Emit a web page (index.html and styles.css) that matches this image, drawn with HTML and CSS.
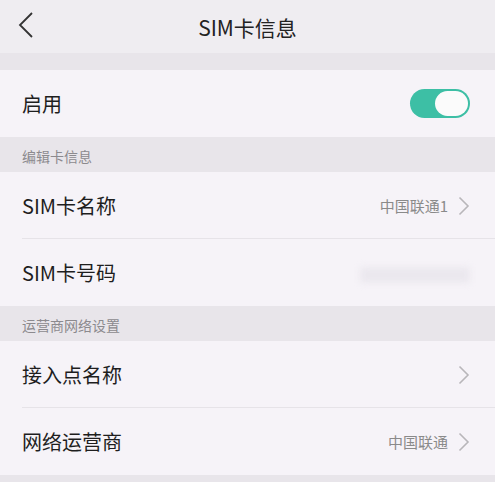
FILE: index.html
```html
<!DOCTYPE html>
<html lang="zh">

<head>
    <meta charset="UTF-8">
    <title>SIM卡信息</title>
    <link rel="stylesheet" href="styles.css">
</head>

<body>
    <div class="page">
        <div class="topbar">
            <svg class="back" width="20" height="28" viewBox="0 0 20 28">
                <path d="M16 2 L4 14 L16 26" fill="none" stroke="#333" stroke-width="1.8"/>
            </svg>
            <span class="title">SIM卡信息</span>
        </div>
        <div class="gap"></div>

        <div class="row">
            <span class="label">启用</span>
            <span class="switch"><i></i></span>
        </div>

        <div class="section">编辑卡信息</div>
        <div class="row line">
            <span class="label">SIM卡名称</span>
            <span class="value">中国联通1</span>
            <svg class="arrow" width="12" height="20" viewBox="0 0 12 20"><path d="M1.5 1.5 L10 10 L1.5 18.5" fill="none" stroke="#b8b6ba" stroke-width="1.6"/></svg>
        </div>
        <div class="row">
            <span class="label">SIM卡号码</span>
            <span class="blur"></span>
        </div>

        <div class="section">运营商网络设置</div>
        <div class="row line">
            <span class="label">接入点名称</span>
            <svg class="arrow" width="12" height="20" viewBox="0 0 12 20"><path d="M1.5 1.5 L10 10 L1.5 18.5" fill="none" stroke="#b8b6ba" stroke-width="1.6"/></svg>
        </div>
        <div class="row">
            <span class="label">网络运营商</span>
            <span class="value">中国联通</span>
            <svg class="arrow" width="12" height="20" viewBox="0 0 12 20"><path d="M1.5 1.5 L10 10 L1.5 18.5" fill="none" stroke="#b8b6ba" stroke-width="1.6"/></svg>
        </div>
        <div class="gap"></div>
    </div>
</body>

</html>
```

FILE: styles.css
```css
* {
    margin: 0;
    padding: 0;
    box-sizing: border-box;
}

body {
    background: #e8e5ea;
    font-family: "Noto Sans CJK SC", "Noto Sans", sans-serif;
    color: #222;
}

.page {
    width: 495px;
}

.topbar {
    position: relative;
    height: 53px;
    background: #efedf1;
    display: flex;
    align-items: center;
    justify-content: center;
}

.back {
    position: absolute;
    left: 16px;
    top: 11px;
}

.title {
    font-size: 21px;
    color: #222;
}

.gap {
    height: 17px;
    background: #e8e5ea;
}

.row {
    position: relative;
    height: 67px;
    background: #f6f3f8;
    display: flex;
    align-items: center;
    padding: 0 25px 0 22px;
}

/* 分隔线 */
.row.line:after {
    content: "";
    position: absolute;
    left: 22px;
    right: 0;
    bottom: 0;
    height: 1px;
    background: #e6e3e8;
}

.label {
    flex: 1;
    font-size: 20px;
    color: #1e1e1e;
}

.value {
    font-size: 15px;
    color: #8a8a8a;
    margin-right: 10px;
}

.arrow {
    display: block;
}

.section {
    height: 35px;
    background: #e8e5ea;
    font-size: 14px;
    color: #8c8a8e;
    padding: 2px 0 0 22px;
    display: flex;
    align-items: center;
}

.switch {
    width: 60px;
    height: 29px;
    border-radius: 15px;
    background: #3dbfa5;
    position: relative;
}

.switch i {
    position: absolute;
    right: 2px;
    top: 2px;
    width: 33px;
    height: 25px;
    border-radius: 13px;
    background: #fbfbfb;
}

.blur {
    width: 110px;
    height: 16px;
    background: #ebe8ee;
    border-radius: 3px;
    filter: blur(3px);
    margin-top: 4px;
}
```
